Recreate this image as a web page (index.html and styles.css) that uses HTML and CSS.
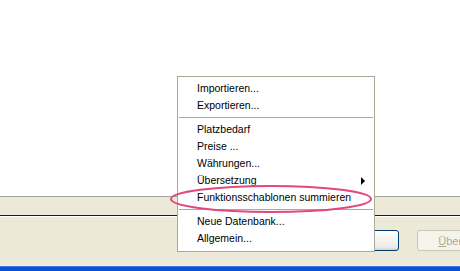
FILE: index.html
```html
<!DOCTYPE html>
<html lang="de">
<head>
    <meta charset="UTF-8">
    <title>Menü</title>
    <link rel="stylesheet" href="styles.css">
</head>
<body>
    <div class="top"></div>
    <div class="panel">
        <div class="rule"></div>
        <div class="buttons">
            <button class="btn">OK</button>
            <button class="btn off"><u>Ü</u>bernehmen</button>
        </div>
    </div>
    <div class="taskbar"></div>

    <ul class="menu">
        <li>Importieren...</li>
        <li>Exportieren...</li>
        <li class="sep"></li>
        <li>Platzbedarf</li>
        <li>Preise ...</li>
        <li>Währungen...</li>
        <li class="sub">Übersetzung</li>
        <li>Funktionsschablonen summieren</li>
        <li class="sep"></li>
        <li>Neue Datenbank...</li>
        <li>Allgemein...</li>
    </ul>

    <svg class="mark" width="206" height="32" viewBox="0 0 206 32">
        <ellipse cx="103" cy="16" rx="100" ry="13" fill="none" stroke="#e0487e" stroke-width="2"/>
    </svg>
</body>
</html>
```

FILE: styles.css
```css
body{
    margin: 0;
    width: 460px;
    height: 271px;
    overflow: hidden;
    background-color: #ece9d8;
    font-family: "Liberation Sans", Arial, sans-serif;
    font-size: 10.5px;
}

.top{
    height: 196px;
    background-color: #ffffff;
    border-bottom: 1px solid #a5a397;
}

.panel{
    height: 69px;
    padding-top: 18px;
    box-sizing: border-box;
    overflow: hidden;
}

.rule{
    height: 1px;
    background-color: #1c1c1c;
    border-bottom: 1px solid #ffffff;
}

.buttons{
    display: flex;
    gap: 18px;
    padding: 13px 0 0 324px;
}

.btn{
    width: 75px;
    height: 21px;
    flex: none;
    border: 1px solid #003c74;
    border-radius: 3px;
    background: linear-gradient(#ffffff, #ecebe6 85%, #d6d0c5);
    font-family: inherit;
    font-size: 11px;
    padding: 0;
}

.btn.off{
    width: 106px;
    border-color: #c9c7ba;
    background: #f5f4ea;
    color: #aca899;
}

.taskbar{
    height: 5px;
    background-color: #0c4fd6;
    border-top: 1px solid #3a78ec;
}

.menu{
    position: absolute;
    left: 177px;
    top: 76px;
    width: 196px;
    margin: 0;
    padding: 3px 0 4px;
    list-style: none;
    background-color: #ffffff;
    border: 1px solid #aca899;
}

.menu li{
    height: 17px;
    line-height: 17px;
    padding-left: 19px;
    color: #000000;
    position: relative;
}

.menu li.sep{
    height: 7px;
    padding: 3px 1px 0;
    box-sizing: border-box;
}

.menu li.sep::before{
    content: "";
    display: block;
    height: 1px;
    background-color: #aca899;
}

.menu li.sub::after{
    content: "";
    position: absolute;
    right: 9px;
    top: 5px;
    border-left: 4px solid #000000;
    border-top: 4px solid transparent;
    border-bottom: 4px solid transparent;
}

.mark{
    position: absolute;
    left: 168px;
    top: 183px;
}
```
